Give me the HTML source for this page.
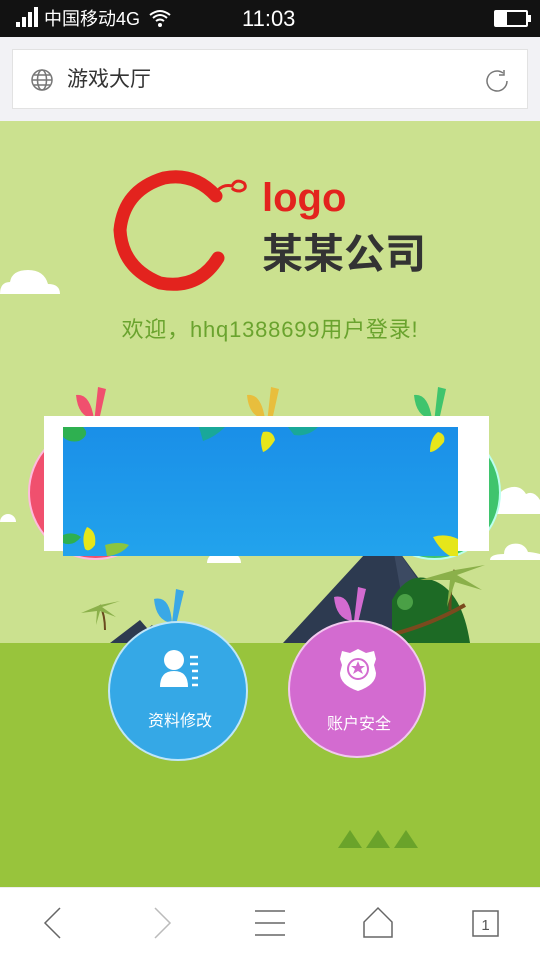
<!DOCTYPE html>
<html><head><meta charset="utf-8"><style>
*{margin:0;padding:0;box-sizing:border-box}
body{width:540px;height:960px;overflow:hidden;position:relative;font-family:"Liberation Sans","Noto Sans CJK SC",sans-serif;background:#fff}
.abs{position:absolute}
</style></head><body>
<div class="abs" style="left:0;top:0;width:540px;height:37px;background:#121212;color:#fff">
 <div class="abs" style="left:16px;top:22px;width:4px;height:5px;background:#fff"></div>
 <div class="abs" style="left:22px;top:17px;width:4px;height:10px;background:#fff"></div>
 <div class="abs" style="left:28px;top:12px;width:4px;height:15px;background:#fff"></div>
 <div class="abs" style="left:34px;top:7px;width:4px;height:20px;background:#fff"></div>
 <div class="abs" style="left:44px;top:7px;font-size:18px;line-height:24px">中国移动4G</div>
 <svg class="abs" style="left:148px;top:8px" width="24" height="20" viewBox="0 0 24 20"><path d="M2 7Q12-1 22 7M5 10Q12 4 19 10M8 13Q12 10 16 13" stroke="#fff" stroke-width="2" fill="none"/><circle cx="12" cy="17" r="2" fill="#fff"/></svg>
 <div class="abs" style="left:242px;top:5px;font-size:22px;line-height:28px">11:03</div>
 <div class="abs" style="left:494px;top:10px;width:34px;height:17px;border:2px solid #fff;border-radius:2px"><div style="width:11px;height:100%;background:#fff"></div></div>
 <div class="abs" style="left:528px;top:15px;width:3px;height:7px;background:#fff"></div>
</div>
<div class="abs" style="left:0;top:37px;width:540px;height:84px;background:#f2f2f5"></div>
<div class="abs" style="left:12px;top:49px;width:516px;height:60px;background:#fff;border:1px solid #e2e2e2"></div>
<svg class="abs" style="left:30px;top:68px" width="24" height="24" viewBox="0 0 24 24" fill="none" stroke="#777" stroke-width="1.5"><circle cx="12" cy="12" r="10"/><ellipse cx="12" cy="12" rx="4.5" ry="10"/><path d="M2 12h20M4 7h16M4 17h16"/></svg>
<div class="abs" style="left:67px;top:66px;font-size:21px;color:#333;line-height:28px">游戏大厅</div>
<svg class="abs" style="left:483px;top:67px" width="28" height="28" viewBox="0 0 28 28" fill="none" stroke="#777" stroke-width="1.5"><path d="M24 14A10 10 0 1 1 20 6"/><path d="M21 3l0 5-5 0" /></svg>
<div class="abs" style="left:0;top:121px;width:540px;height:523px;background:#cbe18f"></div>
<div class="abs" style="left:0;top:643px;width:540px;height:245px;background:#98c43c"></div>
<!-- clouds -->
<svg class="abs" style="left:0;top:262px" width="60" height="32"><path d="M0 32h60q0-10-12-10q-4-14-20-14q-16 0-18 12q-10 0-10 12z" fill="#fff"/></svg>
<svg class="abs" style="left:490px;top:480px" width="50" height="34"><path d="M0 34h50v-14q-6-10-14-6q-6-10-18-6q-12 4-10 14q-8 2-8 12z" fill="#fff"/></svg>
<svg class="abs" style="left:490px;top:538px" width="50" height="22"><path d="M0 22h50v-6q-8-2-12-2q-4-10-16-8q-8 2-8 10q-14 0-14 6z" fill="#fff"/></svg>
<div class="abs" style="left:0;top:514px;width:16px;height:8px;background:#fff;border-radius:8px 8px 0 0"></div>
<div class="abs" style="left:207px;top:553px;width:34px;height:10px;background:#fff;border-radius:10px 10px 0 0"></div>
<!-- logo -->
<svg class="abs" style="left:110px;top:168px" width="140" height="125" viewBox="0 0 140 125"><path d="M106 28Q84 4 54 10Q14 22 10 62Q12 100 50 115Q88 122 108 90" stroke="#e3231e" stroke-width="13" fill="none" stroke-linecap="round"/><path d="M108 22q6-6 14-4q4-8 12-3q4 6-4 8q-6 0-8-3" stroke="#e3231e" stroke-width="3" fill="none"/></svg>
<div class="abs" style="left:262px;top:174px;font-size:40px;font-weight:bold;color:#e3231e;line-height:48px">logo</div>
<div class="abs" style="left:262px;top:230px;font-size:41px;font-weight:bold;color:#333;line-height:48px;letter-spacing:0">某某公司</div>
<div class="abs" style="left:0;top:315px;width:540px;text-align:center;font-size:22px;color:#6aa32e;line-height:30px;letter-spacing:0.8px">欢迎，hhq1388699用户登录!</div>
<!-- fruits behind -->
<div class="abs" style="left:28px;top:425px;width:135px;height:135px;border-radius:50%;background:#f0506e;border:2px solid #fbd"></div>
<div class="abs" style="left:368px;top:425px;width:133px;height:135px;border-radius:50%;background:#3fc46d;border:2px solid #bfe"></div>
<svg class="abs" style="left:70px;top:385px" width="40" height="45"><path d="M6 10q14-2 18 24q-16-2-18-24zM28 2l8 2-8 36-4-2z" fill="#f0506e"/></svg>
<svg class="abs" style="left:243px;top:385px" width="40" height="45"><path d="M4 10q14-2 18 24q-16-2-18-24zM28 2l8 2-8 36-4-2z" fill="#e8be3d"/></svg>
<svg class="abs" style="left:410px;top:385px" width="40" height="45"><path d="M4 10q14-2 18 24q-16-2-18-24zM28 2l8 2-8 36-4-2z" fill="#3fc46d"/></svg>
<!-- mountains -->
<svg class="abs" style="left:80px;top:500px" width="420" height="144"><path d="M203 143L296 42Q304 34 312 42L386 143z" fill="#2d3a50"/><path d="M312 42L345 90 350 143 330 143z" fill="#3c4a62"/><path d="M312 100q16-30 40-20q30 10 38 63h-78z" fill="#1d6a25"/><circle cx="325" cy="102" r="8" fill="#4aa046"/><path d="M310 135q40-10 75-30" stroke="#7a4a1e" stroke-width="4" fill="none"/><path d="M370 110q0-30 5-40" stroke="#6a4a1e" stroke-width="3" fill="none"/><path d="M375 70l30-5-28 10 25 15-27-8-8 25 3-27-30 0z" fill="#8bb04a"/><path d="M30 143L60 120L80 143z" fill="#2d3a50"/><path d="M50 143L72 125L92 143z" fill="#3a4660"/><path d="M25 130q0-15-5-25" stroke="#6a4a1e" stroke-width="2" fill="none"/><path d="M20 105l20-4-18 6 14 10-16-6-4 14 1-14-16 2z" fill="#8bb04a"/></svg>
<!-- banner -->
<div class="abs" style="left:44px;top:416px;width:445px;height:135px;background:#fff"></div>
<div class="abs" style="left:63px;top:427px;width:395px;height:129px;background:linear-gradient(#1a8fe8,#22a3ec)"></div>
<svg class="abs" style="left:63px;top:427px" width="395" height="129"><path d="M0 0h20q8 8-4 14q-10 2-16-4z" fill="#2eb050"/><path d="M136 0h26q-10 10-22 14z" fill="#19a899"/><path d="M200 5q10-2 12 8-6 10-12 12-4-12 0-20z" fill="#e6e61a"/><path d="M225 0h30q-10 10-24 8z" fill="#19a899"/><path d="M375 5q8 2 6 10-8 10-14 10 0-14 8-20z" fill="#e6e61a"/><path d="M0 108q10-4 18 2-8 10-18 6z" fill="#2eb050"/><path d="M24 100q10 4 8 18-6 8-10 4-4-12 2-22z" fill="#e6e61a"/><path d="M42 118q14-4 24 0-8 10-22 11z" fill="#8bc540"/><path d="M370 110q12-4 25 2v17h-8q-10-6-17-19z" fill="#e6e61a"/></svg>
<!-- buttons -->
<svg class="abs" style="left:150px;top:587px" width="40" height="40"><path d="M4 12q16-4 18 24q-16-2-18-24zM26 2l8 2-8 34-4-2z" fill="#3aa8e6"/></svg>
<svg class="abs" style="left:330px;top:585px" width="40" height="40"><path d="M4 12q16-4 18 24q-16-2-18-24zM28 2l8 2-8 34-4-2z" fill="#d36bd0"/></svg>
<div class="abs" style="left:108px;top:621px;width:140px;height:140px;border-radius:50%;background:#35a8e6;border:2px solid #bfe6f8"></div>
<div class="abs" style="left:288px;top:620px;width:138px;height:138px;border-radius:50%;background:#d36bd0;border:2px solid #f2c8ef"></div>
<svg class="abs" style="left:158px;top:648px" width="44" height="40"><circle cx="16" cy="12" r="10" fill="#fff"/><path d="M2 39q0-16 14-16t14 16z" fill="#fff"/><path d="M32 9h8M32 16h8M34 23h6M34 30h6M34 37h6" stroke="#fff" stroke-width="2.5"/></svg>
<div class="abs" style="left:108px;top:707px;width:144px;text-align:center;color:#fff;font-size:16px">资料修改</div>
<svg class="abs" style="left:338px;top:647px" width="40" height="46"><path d="M20 2l8 4 8-2 2 8-2 6 2 8q0 12-18 18Q2 38 2 26l2-8-2-6 2-8 8 2z" fill="#fff"/><circle cx="20" cy="22" r="10" fill="none" stroke="#d36bd0" stroke-width="2"/><path d="M20 14l2 5 5 0-4 3 2 5-5-3-5 3 2-5-4-3 5 0z" fill="#d36bd0"/></svg>
<div class="abs" style="left:288px;top:710px;width:142px;text-align:center;color:#fff;font-size:16px">账户安全</div>
<svg class="abs" style="left:336px;top:827px" width="86" height="22"><path d="M2 21L14 3 26 21zM30 21L42 3 54 21zM58 21L70 3 82 21z" fill="#6aa32a"/></svg>
<!-- bottom nav -->
<div class="abs" style="left:0;top:887px;width:540px;height:73px;background:#fff;border-top:1px solid #eee"></div>
<svg class="abs" style="left:0;top:887px" width="540" height="73" fill="none" stroke="#666" stroke-width="1.5"><path d="M60 21L45 36 60 51"/><path d="M155 21L170 36 155 51" stroke="#bbb"/><path d="M255 24h30M255 36h30M255 48h30"/><path d="M364 50V35L378 21 392 35V50z"/><rect x="473" y="24" width="25" height="25"/><text x="485.5" y="43" font-size="15" text-anchor="middle" fill="#555" stroke="none" font-family="Liberation Sans">1</text></svg>
</body></html>
